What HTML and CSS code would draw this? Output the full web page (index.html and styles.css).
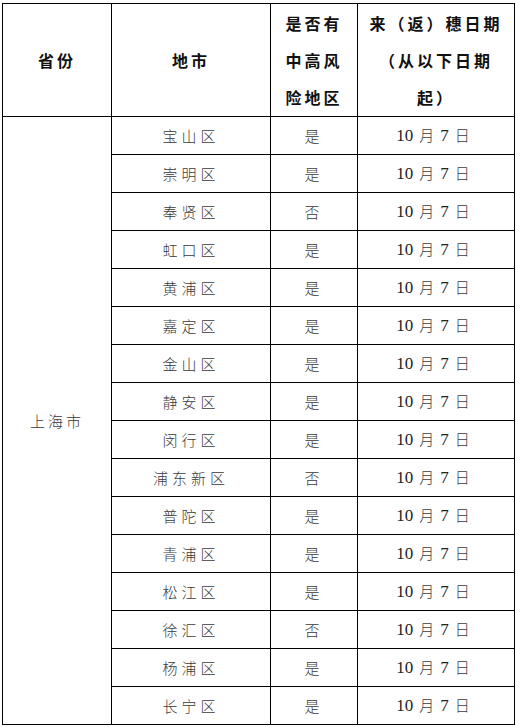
FILE: index.html
```html
<!DOCTYPE html>
<html lang="zh-CN">
<head>
<meta charset="utf-8">
<link rel="stylesheet" href="styles.css">
</head>
<body>
<table class="grid">
  <colgroup>
    <col class="c1"><col class="c2"><col class="c3"><col class="c4">
  </colgroup>
  <thead>
    <tr class="head">
      <th>省份</th>
      <th>地市</th>
      <th>是否有<br>中高风<br>险地区</th>
      <th>来（返）穗日期<br>（从以下日期<br>起）</th>
    </tr>
  </thead>
  <tbody>
    <tr><td class="prov" rowspan="16">上海市</td><td>宝山区</td><td>是</td><td class="date">10<span class="cj">月</span>7<span class="cj">日</span></td></tr>
    <tr><td>崇明区</td><td>是</td><td class="date">10<span class="cj">月</span>7<span class="cj">日</span></td></tr>
    <tr><td>奉贤区</td><td>否</td><td class="date">10<span class="cj">月</span>7<span class="cj">日</span></td></tr>
    <tr><td>虹口区</td><td>是</td><td class="date">10<span class="cj">月</span>7<span class="cj">日</span></td></tr>
    <tr><td>黄浦区</td><td>是</td><td class="date">10<span class="cj">月</span>7<span class="cj">日</span></td></tr>
    <tr><td>嘉定区</td><td>是</td><td class="date">10<span class="cj">月</span>7<span class="cj">日</span></td></tr>
    <tr><td>金山区</td><td>是</td><td class="date">10<span class="cj">月</span>7<span class="cj">日</span></td></tr>
    <tr><td>静安区</td><td>是</td><td class="date">10<span class="cj">月</span>7<span class="cj">日</span></td></tr>
    <tr><td>闵行区</td><td>是</td><td class="date">10<span class="cj">月</span>7<span class="cj">日</span></td></tr>
    <tr><td>浦东新区</td><td>否</td><td class="date">10<span class="cj">月</span>7<span class="cj">日</span></td></tr>
    <tr><td>普陀区</td><td>是</td><td class="date">10<span class="cj">月</span>7<span class="cj">日</span></td></tr>
    <tr><td>青浦区</td><td>是</td><td class="date">10<span class="cj">月</span>7<span class="cj">日</span></td></tr>
    <tr><td>松江区</td><td>是</td><td class="date">10<span class="cj">月</span>7<span class="cj">日</span></td></tr>
    <tr><td>徐汇区</td><td>否</td><td class="date">10<span class="cj">月</span>7<span class="cj">日</span></td></tr>
    <tr><td>杨浦区</td><td>是</td><td class="date">10<span class="cj">月</span>7<span class="cj">日</span></td></tr>
    <tr><td>长宁区</td><td>是</td><td class="date">10<span class="cj">月</span>7<span class="cj">日</span></td></tr>
  </tbody>
</table>
</body>
</html>
```
FILE: styles.css
```css
html, body {
  margin: 0;
  padding: 0;
  background: #fff;
}
body {
  padding: 3px 0 0 2px;
  font-family: "Noto Sans CJK SC", "Noto Sans", sans-serif;
  color: #333;
}
.grid {
  border-collapse: collapse;
  table-layout: fixed;
  width: 512px;
}
.c1 { width: 109px; }
.c2 { width: 159px; }
.c3 { width: 87px; }
.c4 { width: 157px; }
.grid th, .grid td {
  border: 1px solid #000;
  padding: 0;
  text-align: center;
  vertical-align: middle;
}
.head th {
  height: 112px;
  font-size: 16px;
  font-weight: 700;
  color: #111;
  line-height: 37px;
  letter-spacing: 3px;
}
.grid td {
  height: 37px;
  font-size: 15px;
  font-weight: 300;
  letter-spacing: 4px;
  line-height: 20px;
  color: #3a3a3a;
}
.grid td.prov {
  letter-spacing: 3px;
}
.grid td.date {
  font-family: "Liberation Serif", "Noto Sans CJK SC", serif;
  font-size: 17px;
  font-weight: 400;
  letter-spacing: 0;
  color: #222;
}
.cj {
  font-family: "Noto Sans CJK SC", sans-serif;
  font-size: 15px;
  font-weight: 300;
  color: #3a3a3a;
  padding: 0 6px;
}
```
